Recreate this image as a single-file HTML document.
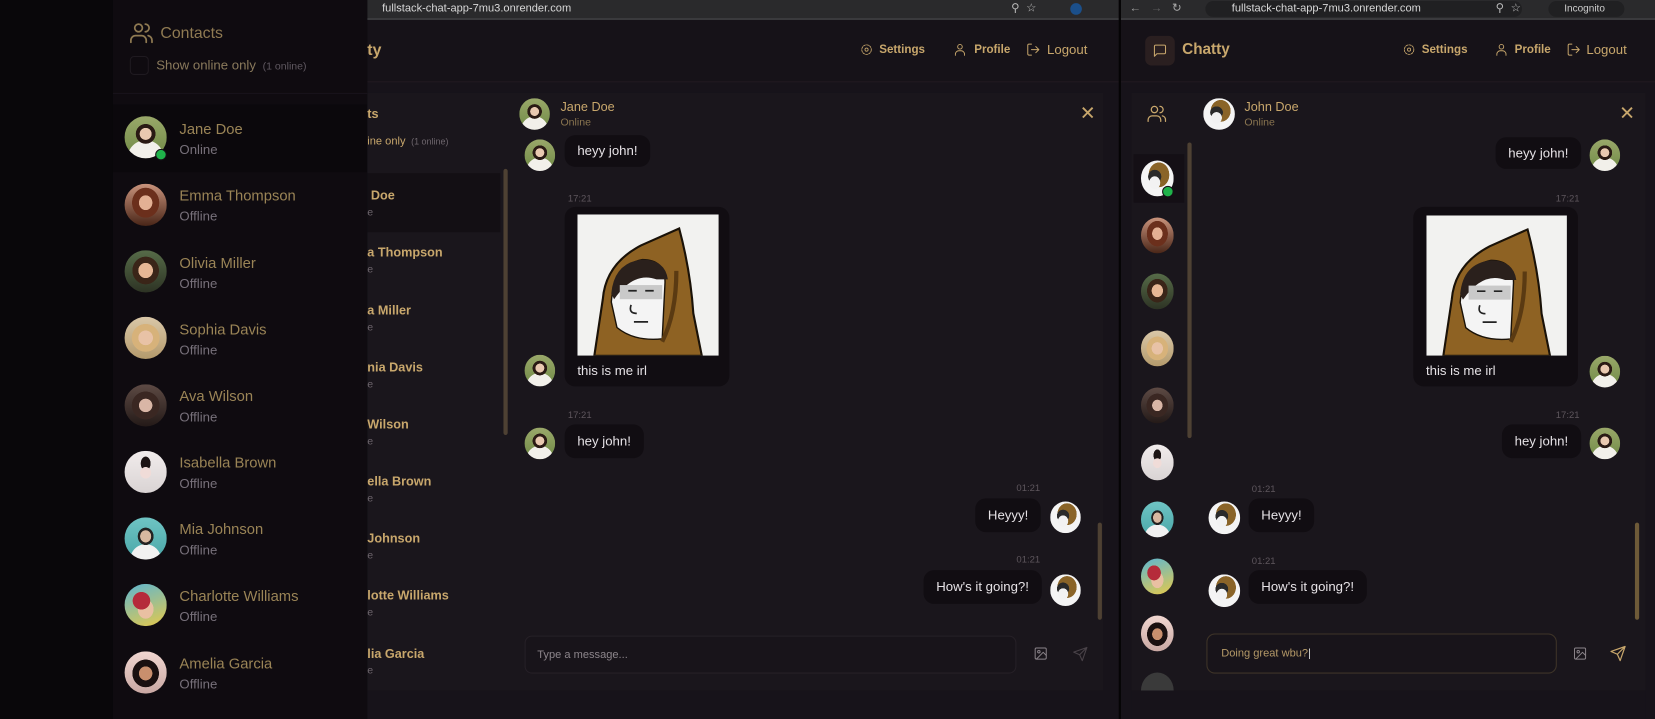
<!DOCTYPE html>
<html><head><meta charset="utf-8">
<style>
*{margin:0;padding:0;box-sizing:border-box}
html,body{width:1655px;height:719px;overflow:hidden;background:#0b090c;font-family:"Liberation Sans",sans-serif}
#w{position:absolute;left:0;top:0;width:1568px;height:681px;transform:scale(1.05548,1.0558);transform-origin:0 0;overflow:hidden;background:#0b090c}
.a{position:absolute}
.av{position:absolute;border-radius:50%;overflow:hidden}
.t{position:absolute;white-space:nowrap}
.gold{color:#c8a76c}
.bub{position:absolute;background:#110d12;border-radius:10px;color:#e6e2e6;font-size:12.5px;padding:0 12px;display:flex;align-items:center}
.tm{position:absolute;font-size:9px;color:#5e565d}
.jane{background:radial-gradient(circle at 50% 42%,#e9c9b0 0 18%,#2a1a14 19% 30%,transparent 31%),radial-gradient(circle at 50% 100%,#f2f0ea 0 38%,transparent 39%),linear-gradient(#9aa86a,#6f8a45)}
.emma{background:radial-gradient(ellipse at 50% 45%,#e3b094 0 22%,#6b2f1c 23% 45%,transparent 46%),linear-gradient(#c9937c,#4a2618)}
.oli{background:radial-gradient(ellipse at 50% 48%,#e6b795 0 24%,#3a2518 25% 44%,transparent 45%),linear-gradient(#566b48,#2d3324)}
.soph{background:radial-gradient(ellipse at 50% 50%,#e8c2a6 0 24%,#d7b27a 25% 46%,transparent 47%),linear-gradient(#d9c7a8,#b49a6c)}
.ava{background:radial-gradient(ellipse at 50% 50%,#d9b6a6 0 22%,#3a2722 23% 46%,transparent 47%),linear-gradient(#5d4a44,#241a18)}
.isa{background:radial-gradient(ellipse at 50% 52%,#f0dcd8 0 18%,transparent 19%),radial-gradient(ellipse at 50% 30%,#1c1414 0 16%,transparent 17%),linear-gradient(#f1ecec,#d9d3d3)}
.mia{background:radial-gradient(ellipse at 50% 45%,#d8b8a0 0 18%,#222 19% 26%,transparent 27%),radial-gradient(circle at 50% 100%,#f1f1f1 0 32%,transparent 33%),linear-gradient(#6fc4c4,#4aa7a8)}
.cha{background:radial-gradient(ellipse at 40% 40%,#b52b3a 0 24%,transparent 25%),radial-gradient(ellipse at 50% 60%,#e9c0a2 0 26%,transparent 27%),linear-gradient(160deg,#5db6d0,#e5c94b)}
.ame{background:radial-gradient(ellipse at 50% 52%,#c98f6d 0 22%,#1a1010 23% 44%,transparent 45%),linear-gradient(#f0d6d0,#c9a8a3)}
.john{background:radial-gradient(ellipse at 42% 62%,#f2f2f2 0 20%,transparent 21%),radial-gradient(ellipse at 42% 45%,#2a2a2a 0 24%,transparent 25%),radial-gradient(ellipse at 55% 40%,#8a6428 0 40%,transparent 41%),#f4f4f4}
.dot{position:absolute;width:11px;height:11px;border-radius:50%;background:#1fb24a;border:1.5px solid #141015}
.ic{position:absolute;stroke:#c8a76c;fill:none;stroke-width:1.8;stroke-linecap:round;stroke-linejoin:round}
</style></head><body><div id="w">

<svg width="0" height="0" style="position:absolute">
<defs>
<symbol id="hood" viewBox="0 0 100 100">
<rect width="100" height="100" fill="#f2f2f0"/>
<path d="M12 100 L18 60 Q20 35 45 22 L72 10 Q80 40 82 70 L88 100Z" fill="#8e6223" stroke="#1a1208" stroke-width="1.5"/>
<path d="M24 62 Q26 36 46 32 Q62 32 62 48 L60 88 Q40 90 28 80Z" fill="#f4f4f4" stroke="#1a1208" stroke-width="1"/>
<path d="M24 56 Q26 34 46 32 Q62 32 64 46 L56 46 Q40 40 26 60Z" fill="#2a201c"/>
<rect x="30" y="50" width="30" height="10" fill="#c9c9c9"/>
<path d="M36 54h6M48 54h6M38 64q-2 6 4 6M40 76h10" stroke="#222" stroke-width="1.2" fill="none"/>
<path d="M60 90 Q70 70 70 40" stroke="#5a3a12" stroke-width="3" fill="none"/>
</symbol>
</defs>
</svg>

<!-- LEFT overlay -->
<div class="a" style="left:0;top:0;width:107px;height:681px;background:#09070a"></div>
<div class="a" style="left:107px;top:0;width:241px;height:681px;background:#0f0b10"></div>
<svg class="ic" style="left:123px;top:21px;stroke:#8f7a52" width="22" height="20" viewBox="0 0 24 22"><circle cx="9" cy="6" r="4"/><path d="M1 21v-2a5 5 0 0 1 5-5h6a5 5 0 0 1 5 5v2M16 2a4 4 0 0 1 0 8M23 21v-2a5 5 0 0 0-4-5"/></svg>
<div class="t" style="left:152px;top:23px;font-size:15px;color:#8f7a52">Contacts</div>
<div class="a" style="left:123px;top:53px;width:18px;height:18px;border:1px solid #1f1a20;border-radius:4px"></div>
<div class="t" style="left:148px;top:55px;font-size:12.5px;color:#8a7a5c">Show online only <span style="font-size:10px;color:#5f5860">&nbsp;(1 online)</span></div>
<div class="a" style="left:107px;top:88px;width:241px;height:1px;background:#18131a"></div>
<div class="a" style="left:107px;top:99px;width:241px;height:64px;background:#0b080c"></div>

<div class="av jane" style="left:118px;top:110px;width:40px;height:40px"></div><div class="dot" style="left:147px;top:141px"></div>
<div class="t" style="left:170px;top:114px;font-size:14px;color:#9a8456">Jane Doe</div><div class="t" style="left:170px;top:135px;font-size:12.5px;color:#77707a">Online</div>
<div class="av emma" style="left:118px;top:174px;width:40px;height:40px"></div>
<div class="t" style="left:170px;top:177px;font-size:14px;color:#9a8456">Emma Thompson</div><div class="t" style="left:170px;top:198px;font-size:12.5px;color:#77707a">Offline</div>
<div class="av oli" style="left:118px;top:237px;width:40px;height:40px"></div>
<div class="t" style="left:170px;top:241px;font-size:14px;color:#9a8456">Olivia Miller</div><div class="t" style="left:170px;top:262px;font-size:12.5px;color:#77707a">Offline</div>
<div class="av soph" style="left:118px;top:300px;width:40px;height:40px"></div>
<div class="t" style="left:170px;top:304px;font-size:14px;color:#9a8456">Sophia Davis</div><div class="t" style="left:170px;top:325px;font-size:12.5px;color:#77707a">Offline</div>
<div class="av ava" style="left:118px;top:364px;width:40px;height:40px"></div>
<div class="t" style="left:170px;top:367px;font-size:14px;color:#9a8456">Ava Wilson</div><div class="t" style="left:170px;top:388px;font-size:12.5px;color:#77707a">Offline</div>
<div class="av isa" style="left:118px;top:427px;width:40px;height:40px"></div>
<div class="t" style="left:170px;top:430px;font-size:14px;color:#9a8456">Isabella Brown</div><div class="t" style="left:170px;top:451px;font-size:12.5px;color:#77707a">Offline</div>
<div class="av mia" style="left:118px;top:490px;width:40px;height:40px"></div>
<div class="t" style="left:170px;top:493px;font-size:14px;color:#9a8456">Mia Johnson</div><div class="t" style="left:170px;top:514px;font-size:12.5px;color:#77707a">Offline</div>
<div class="av cha" style="left:118px;top:553px;width:40px;height:40px"></div>
<div class="t" style="left:170px;top:556px;font-size:14px;color:#9a8456">Charlotte Williams</div><div class="t" style="left:170px;top:577px;font-size:12.5px;color:#77707a">Offline</div>
<div class="av ame" style="left:118px;top:617px;width:40px;height:40px"></div>
<div class="t" style="left:170px;top:620px;font-size:14px;color:#9a8456">Amelia Garcia</div><div class="t" style="left:170px;top:641px;font-size:12.5px;color:#77707a">Offline</div>

<!-- MIDDLE browser -->
<div class="a" style="left:348px;top:0;width:712px;height:681px;background:#17131a;overflow:hidden">
  <div class="a" style="left:0;top:0;width:712px;height:19px;background:#2a2a2c"></div>
  <div class="a" style="left:0;top:17px;width:712px;height:2px;background:#3a3a3d"></div>
  <div class="t" style="left:14px;top:2px;font-size:10.5px;color:#d8d8d8">fullstack-chat-app-7mu3.onrender.com</div>
  <div class="t" style="left:610px;top:1px;font-size:11px;color:#bbb">⚲ &nbsp;☆</div>
  <div class="a" style="left:666px;top:3px;width:11px;height:11px;border-radius:50%;background:#1b4f8a"></div>
  <div class="a" style="left:0;top:19px;width:712px;height:58px;background:#161218"></div>
  <div class="a" style="left:0;top:77px;width:712px;height:1px;background:#221a20"></div>
  <div class="t gold" style="left:0;top:39px;font-size:15px;font-weight:bold;color:#c8a76c">ty</div>
  <svg class="ic" style="left:467px;top:41px;stroke-width:1.6" width="12" height="12" viewBox="0 0 24 24"><circle cx="12" cy="12" r="3"/><circle cx="12" cy="12" r="9" stroke-dasharray="4 2"/></svg>
  <div class="t gold" style="left:485px;top:41px;font-size:11px;font-weight:bold">Settings</div>
  <svg class="ic" style="left:555px;top:40px;stroke-width:1.6" width="13" height="14" viewBox="0 0 24 24"><circle cx="12" cy="7" r="4"/><path d="M4 22v-2a6 6 0 0 1 6-6h4a6 6 0 0 1 6 6v2"/></svg>
  <div class="t gold" style="left:575px;top:41px;font-size:11px;font-weight:bold">Profile</div>
  <svg class="ic" style="left:624px;top:40px;stroke-width:1.6" width="14" height="14" viewBox="0 0 24 24"><path d="M9 21H5a2 2 0 0 1-2-2V5a2 2 0 0 1 2-2h4M16 17l5-5-5-5M21 12H9"/></svg>
  <div class="t gold" style="left:644px;top:40px;font-size:12.5px">Logout</div>

  <div class="a" style="left:0;top:88px;width:697px;height:566px;background:#1a161c"></div>
  <div class="t gold" style="left:0;top:101px;font-size:12px;font-weight:bold">ts</div>
  <div class="t gold" style="left:0;top:128px;font-size:10.5px">ine only <span style="font-size:8.5px;color:#6e666d">&nbsp;(1 online)</span></div>
  <div class="a" style="left:0;top:164px;width:126px;height:56px;background:#130f14"></div>
  <div class="a" style="left:129px;top:160px;width:4px;height:252px;background:#4e4133;border-radius:2px"></div>
  <div class="t gold" style="left:0;top:178px;font-size:12px;font-weight:bold">&nbsp;Doe</div>
  <div class="t gold" style="left:0;top:232px;font-size:12px;font-weight:bold">a Thompson</div>
  <div class="t gold" style="left:0;top:287px;font-size:12px;font-weight:bold">a Miller</div>
  <div class="t gold" style="left:0;top:341px;font-size:12px;font-weight:bold">nia Davis</div>
  <div class="t gold" style="left:0;top:395px;font-size:12px;font-weight:bold">Wilson</div>
  <div class="t gold" style="left:0;top:449px;font-size:12px;font-weight:bold">ella Brown</div>
  <div class="t gold" style="left:0;top:503px;font-size:12px;font-weight:bold">Johnson</div>
  <div class="t gold" style="left:0;top:557px;font-size:12px;font-weight:bold">lotte Williams</div>
  <div class="t gold" style="left:0;top:612px;font-size:12px;font-weight:bold">lia Garcia</div>
  <div class="t" style="left:0;top:196px;font-size:10px;color:#6e666d">e</div><div class="t" style="left:0;top:250px;font-size:10px;color:#6e666d">e</div><div class="t" style="left:0;top:305px;font-size:10px;color:#6e666d">e</div><div class="t" style="left:0;top:359px;font-size:10px;color:#6e666d">e</div><div class="t" style="left:0;top:413px;font-size:10px;color:#6e666d">e</div><div class="t" style="left:0;top:467px;font-size:10px;color:#6e666d">e</div><div class="t" style="left:0;top:521px;font-size:10px;color:#6e666d">e</div><div class="t" style="left:0;top:575px;font-size:10px;color:#6e666d">e</div><div class="t" style="left:0;top:630px;font-size:10px;color:#6e666d">e</div>

  <div class="av jane" style="left:144px;top:93px;width:29px;height:30px"></div>
  <div class="t gold" style="left:183px;top:94px;font-size:12px">Jane Doe</div>
  <div class="t" style="left:183px;top:111px;font-size:10px;color:#8a7550">Online</div>
  <div class="t" style="left:675px;top:97px;font-size:18px;color:#c8a76c">✕</div>

  <div class="av jane" style="left:149px;top:132px;width:29px;height:30px"></div>
  <div class="bub" style="left:187px;top:128px;height:30px">heyy john!</div>
  <div class="tm" style="left:190px;top:183px">17:21</div>
  <div class="a" style="left:187px;top:196px;width:156px;height:170px;background:#110d12;border-radius:10px"></div>
  <svg class="a" style="left:199px;top:203px" width="134" height="134"><use href="#hood" width="134" height="134"/></svg>
  <div class="t" style="left:199px;top:344px;font-size:12.5px;color:#e6e2e6">this is me irl</div>
  <div class="av jane" style="left:149px;top:336px;width:29px;height:30px"></div>
  <div class="tm" style="left:190px;top:388px">17:21</div>
  <div class="av jane" style="left:149px;top:405px;width:29px;height:30px"></div>
  <div class="bub" style="left:187px;top:402px;height:32px">hey john!</div>
  <div class="tm" style="left:615px;top:457px">01:21</div>
  <div class="bub" style="left:576px;top:472px;height:32px">Heyyy!</div>
  <div class="av john" style="left:647px;top:475px;width:29px;height:30px"></div>
  <div class="tm" style="left:615px;top:525px">01:21</div>
  <div class="bub" style="left:527px;top:540px;height:32px">How's it going?!</div>
  <div class="av john" style="left:647px;top:544px;width:29px;height:30px"></div>
  <div class="a" style="left:692px;top:495px;width:4px;height:92px;background:#4e4133;border-radius:2px"></div>
  <div class="a" style="left:149px;top:602px;width:466px;height:36px;border:1px solid #262027;border-radius:7px;background:#18141a"></div>
  <div class="t" style="left:161px;top:614px;font-size:10.5px;color:#8c858b">Type a message...</div>
  <svg class="ic" style="left:631px;top:612px;stroke:#8c858b;stroke-width:1.6" width="14" height="14" viewBox="0 0 24 24"><rect x="3" y="3" width="18" height="18" rx="2"/><circle cx="9" cy="9" r="2"/><path d="M21 15l-5-5L5 21"/></svg>
  <svg class="ic" style="left:668px;top:612px;stroke:#4a4349;stroke-width:1.6" width="15" height="15" viewBox="0 0 24 24"><path d="M22 2L11 13M22 2l-7 20-4-9-9-4z"/></svg>
</div>

<div class="a" style="left:1060px;top:0;width:2px;height:681px;background:#050405"></div>

<!-- RIGHT browser -->
<div class="a" style="left:1062px;top:0;width:506px;height:681px;background:#17131a;overflow:hidden">
  <div class="a" style="left:0;top:0;width:506px;height:19px;background:#2a2a2c"></div>
  <div class="a" style="left:0;top:17px;width:506px;height:2px;background:#3a3a3d"></div>
  <div class="t" style="left:8px;top:1px;font-size:11px;color:#aaa">←&nbsp;&nbsp;&nbsp;<span style="color:#666">→</span>&nbsp;&nbsp;&nbsp;↻</div>
  <div class="a" style="left:80px;top:1px;width:300px;height:15px;background:#202022;border-radius:8px"></div>
  <div class="t" style="left:105px;top:2px;font-size:10.5px;color:#d8d8d8">fullstack-chat-app-7mu3.onrender.com</div>
  <div class="t" style="left:355px;top:1px;font-size:11px;color:#bbb">⚲ &nbsp;☆</div>
  <div class="a" style="left:405px;top:1px;width:72px;height:15px;background:#202022;border-radius:8px"></div>
  <div class="t" style="left:420px;top:3px;font-size:9.5px;color:#ccc">Incognito</div>
  <div class="a" style="left:0;top:19px;width:506px;height:58px;background:#161218"></div>
  <div class="a" style="left:0;top:77px;width:506px;height:1px;background:#221a20"></div>
  <div class="a" style="left:23px;top:34px;width:28px;height:28px;background:#2a1f20;border-radius:6px"></div>
  <svg class="ic" style="left:30px;top:41px;stroke-width:1.7" width="14" height="14" viewBox="0 0 24 24"><path d="M21 15a2 2 0 0 1-2 2H7l-4 4V5a2 2 0 0 1 2-2h14a2 2 0 0 1 2 2z"/></svg>
  <div class="t gold" style="left:58px;top:39px;font-size:14.5px;font-weight:bold">Chatty</div>
  <svg class="ic" style="left:267px;top:41px;stroke-width:1.6" width="12" height="12" viewBox="0 0 24 24"><circle cx="12" cy="12" r="3"/><circle cx="12" cy="12" r="9" stroke-dasharray="4 2"/></svg>
  <div class="t gold" style="left:285px;top:41px;font-size:11px;font-weight:bold">Settings</div>
  <svg class="ic" style="left:354px;top:40px;stroke-width:1.6" width="13" height="14" viewBox="0 0 24 24"><circle cx="12" cy="7" r="4"/><path d="M4 22v-2a6 6 0 0 1 6-6h4a6 6 0 0 1 6 6v2"/></svg>
  <div class="t gold" style="left:373px;top:41px;font-size:11px;font-weight:bold">Profile</div>
  <svg class="ic" style="left:422px;top:40px;stroke-width:1.6" width="14" height="14" viewBox="0 0 24 24"><path d="M9 21H5a2 2 0 0 1-2-2V5a2 2 0 0 1 2-2h4M16 17l5-5-5-5M21 12H9"/></svg>
  <div class="t gold" style="left:441px;top:40px;font-size:12.5px">Logout</div>

  <div class="a" style="left:10px;top:88px;width:487px;height:566px;background:#1a161c"></div>
  <svg class="ic" style="left:25px;top:99px;stroke-width:1.6" width="18" height="17" viewBox="0 0 24 22"><circle cx="9" cy="6" r="4"/><path d="M1 21v-2a5 5 0 0 1 5-5h6a5 5 0 0 1 5 5v2M16 2a4 4 0 0 1 0 8M23 21v-2a5 5 0 0 0-4-5"/></svg>
  <div class="a" style="left:63px;top:135px;width:4px;height:280px;background:#4e4133;border-radius:2px"></div>
  <div class="a" style="left:12px;top:146px;width:48px;height:46px;background:#140f15"></div>
  <div class="av john" style="left:19px;top:152px;width:31px;height:34px"></div><div class="dot" style="left:39px;top:176px"></div>
  <div class="av emma" style="left:19px;top:206px;width:31px;height:34px"></div>
  <div class="av oli" style="left:19px;top:259px;width:31px;height:34px"></div>
  <div class="av soph" style="left:19px;top:313px;width:31px;height:34px"></div>
  <div class="av ava" style="left:19px;top:367px;width:31px;height:34px"></div>
  <div class="av isa" style="left:19px;top:421px;width:31px;height:34px"></div>
  <div class="av mia" style="left:19px;top:475px;width:31px;height:34px"></div>
  <div class="av cha" style="left:19px;top:529px;width:31px;height:34px"></div>
  <div class="av ame" style="left:19px;top:583px;width:31px;height:34px"></div>
  <div class="av" style="left:19px;top:637px;width:31px;height:34px;background:#3a3a3a"></div>
  <div class="a" style="left:10px;top:654px;width:487px;height:27px;background:#17131a"></div>

  <div class="av john" style="left:78px;top:93px;width:30px;height:30px"></div>
  <div class="t gold" style="left:117px;top:94px;font-size:12px">John Doe</div>
  <div class="t" style="left:117px;top:111px;font-size:10px;color:#8a7550">Online</div>
  <div class="t" style="left:472px;top:97px;font-size:18px;color:#c8a76c">✕</div>

  <div class="bub" style="left:355px;top:130px;height:30px">heyy john!</div>
  <div class="av jane" style="left:444px;top:132px;width:29px;height:30px"></div>
  <div class="tm" style="left:412px;top:183px">17:21</div>
  <div class="a" style="left:277px;top:196px;width:156px;height:170px;background:#110d12;border-radius:10px"></div>
  <svg class="a" style="left:289px;top:204px" width="134" height="133"><use href="#hood" width="134" height="133"/></svg>
  <div class="t" style="left:289px;top:344px;font-size:12.5px;color:#e6e2e6">this is me irl</div>
  <div class="av jane" style="left:444px;top:337px;width:29px;height:30px"></div>
  <div class="tm" style="left:412px;top:388px">17:21</div>
  <div class="bub" style="left:361px;top:402px;height:32px">hey john!</div>
  <div class="av jane" style="left:444px;top:405px;width:29px;height:30px"></div>
  <div class="tm" style="left:124px;top:458px">01:21</div>
  <div class="av john" style="left:83px;top:475px;width:30px;height:31px"></div>
  <div class="bub" style="left:121px;top:472px;height:32px">Heyyy!</div>
  <div class="tm" style="left:124px;top:526px">01:21</div>
  <div class="av john" style="left:83px;top:544px;width:30px;height:31px"></div>
  <div class="bub" style="left:121px;top:540px;height:32px">How's it going?!</div>
  <div class="a" style="left:487px;top:495px;width:4px;height:92px;background:#6e5a38;border-radius:2px"></div>
  <div class="a" style="left:81px;top:600px;width:332px;height:38px;border:1px solid #3e3428;border-radius:8px;background:#18141a"></div>
  <div class="t" style="left:95px;top:613px;font-size:10.5px;color:#b59a68">Doing great wbu?<span style="color:#ddd">|</span></div>
  <svg class="ic" style="left:428px;top:612px;stroke:#8c858b;stroke-width:1.6" width="14" height="14" viewBox="0 0 24 24"><rect x="3" y="3" width="18" height="18" rx="2"/><circle cx="9" cy="9" r="2"/><path d="M21 15l-5-5L5 21"/></svg>
  <svg class="ic" style="left:463px;top:611px;stroke-width:1.7" width="16" height="16" viewBox="0 0 24 24"><path d="M22 2L11 13M22 2l-7 20-4-9-9-4z"/></svg>
</div>

</div></body></html>
